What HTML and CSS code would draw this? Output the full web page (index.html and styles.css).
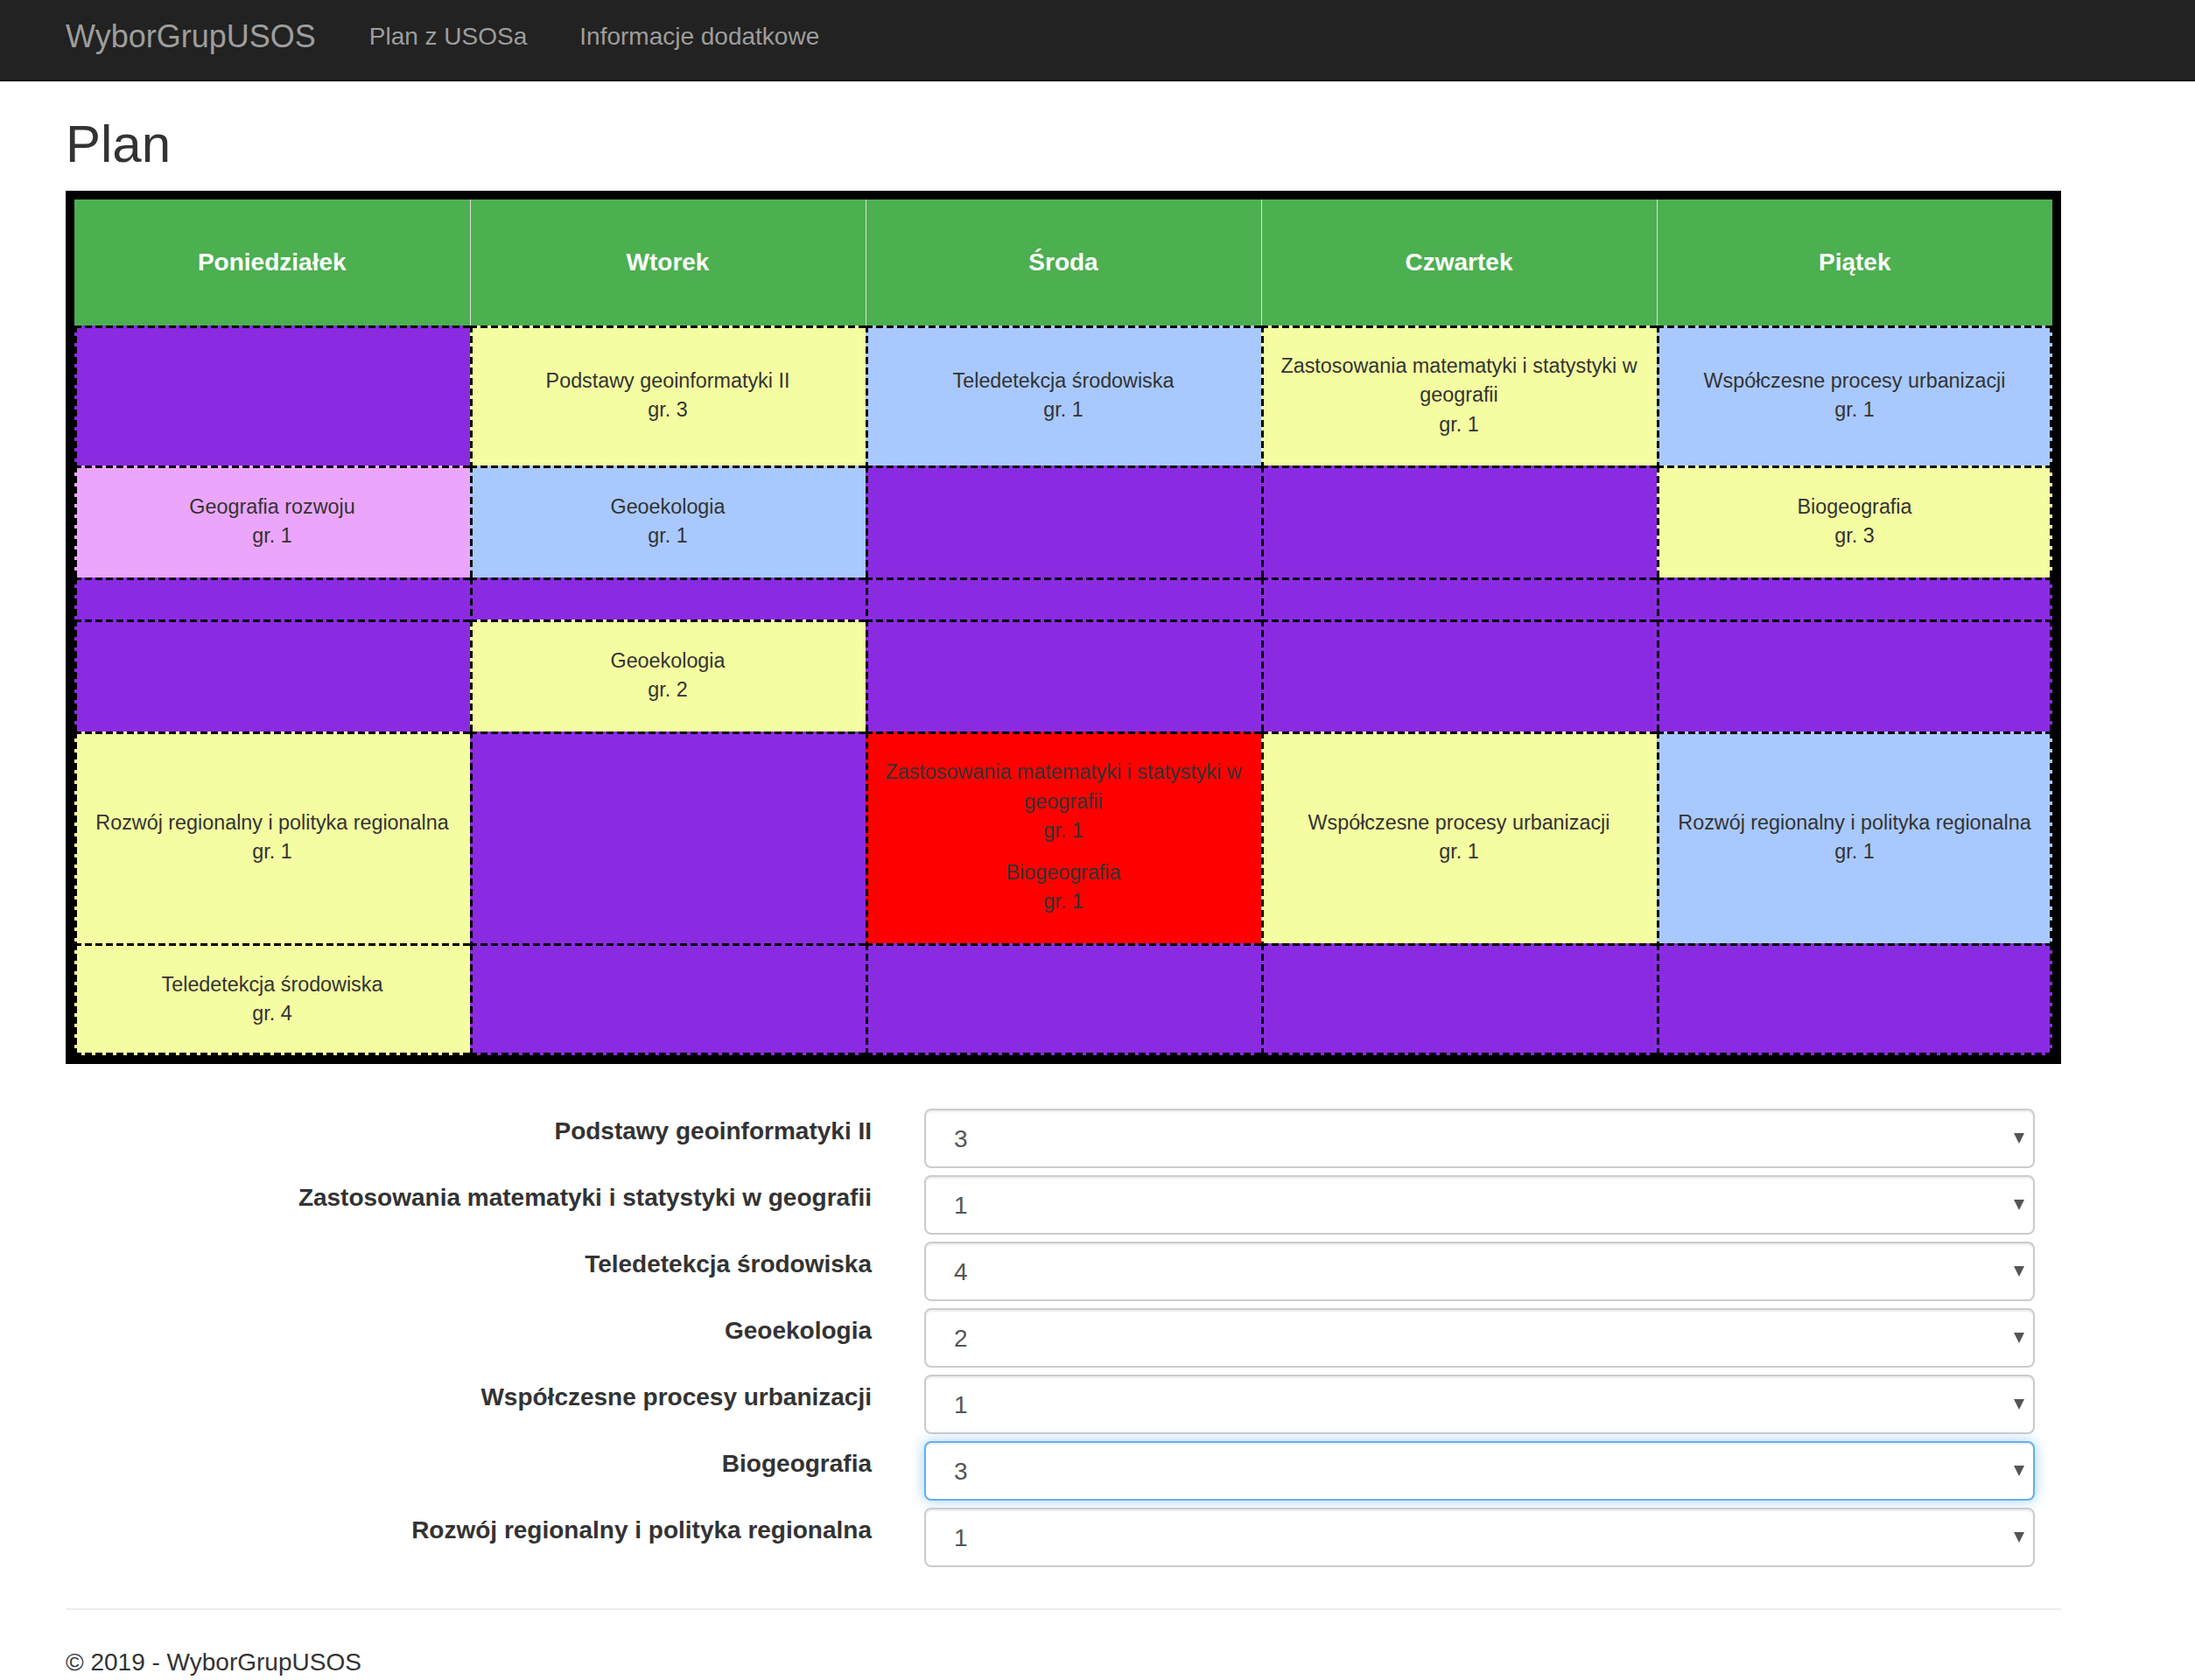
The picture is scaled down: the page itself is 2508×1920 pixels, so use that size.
FILE: index.html
```html
<!DOCTYPE html>
<html lang="pl">
<head>
<meta charset="utf-8">
<title>Plan - WyborGrupUSOS</title>
<link rel="stylesheet" href="styles.css">
</head>
<body>
<nav class="navbar">
  <div class="nav-inner">
    <a class="brand" href="#">WyborGrupUSOS</a>
    <ul class="nav-links">
      <li><a href="#">Plan z USOSa</a></li>
      <li><a href="#">Informacje dodatkowe</a></li>
    </ul>
  </div>
</nav>
<main class="container">
  <h2 class="title">Plan</h2>
  <div class="plan-frame">
    <table class="plan">
      <thead>
        <tr class="row-head">
          <th>Poniedziałek</th><th>Wtorek</th><th>Środa</th><th>Czwartek</th><th>Piątek</th>
        </tr>
      </thead>
      <tbody>
        <tr class="row-a">
          <td class="free"></td>
          <td class="yellow"><div class="entry">Podstawy geoinformatyki II<br>gr. 3</div></td>
          <td class="blue"><div class="entry">Teledetekcja środowiska<br>gr. 1</div></td>
          <td class="yellow"><div class="entry">Zastosowania matematyki i statystyki w geografii<br>gr. 1</div></td>
          <td class="blue"><div class="entry">Współczesne procesy urbanizacji<br>gr. 1</div></td>
        </tr>
        <tr class="row-b">
          <td class="pink"><div class="entry">Geografia rozwoju<br>gr. 1</div></td>
          <td class="blue"><div class="entry">Geoekologia<br>gr. 1</div></td>
          <td class="free"></td>
          <td class="free"></td>
          <td class="yellow"><div class="entry">Biogeografia<br>gr. 3</div></td>
        </tr>
        <tr class="row-c">
          <td class="free"></td><td class="free"></td><td class="free"></td><td class="free"></td><td class="free"></td>
        </tr>
        <tr class="row-b">
          <td class="free"></td>
          <td class="yellow"><div class="entry">Geoekologia<br>gr. 2</div></td>
          <td class="free"></td>
          <td class="free"></td>
          <td class="free"></td>
        </tr>
        <tr class="row-d">
          <td class="yellow"><div class="entry">Rozwój regionalny i polityka regionalna<br>gr. 1</div></td>
          <td class="free"></td>
          <td class="red"><div class="entry">Zastosowania matematyki i statystyki w geografii<br>gr. 1</div><div class="entry">Biogeografia<br>gr. 1</div></td>
          <td class="yellow"><div class="entry">Współczesne procesy urbanizacji<br>gr. 1</div></td>
          <td class="blue"><div class="entry">Rozwój regionalny i polityka regionalna<br>gr. 1</div></td>
        </tr>
        <tr class="row-b">
          <td class="yellow"><div class="entry">Teledetekcja środowiska<br>gr. 4</div></td>
          <td class="free"></td><td class="free"></td><td class="free"></td><td class="free"></td>
        </tr>
      </tbody>
    </table>
  </div>

  <form class="groups">
    <div class="form-row">
      <label class="form-label">Podstawy geoinformatyki II</label>
      <div class="select-wrap"><select class="form-select"><option>3</option></select></div>
    </div>
    <div class="form-row">
      <label class="form-label">Zastosowania matematyki i statystyki w geografii</label>
      <div class="select-wrap"><select class="form-select"><option>1</option></select></div>
    </div>
    <div class="form-row">
      <label class="form-label">Teledetekcja środowiska</label>
      <div class="select-wrap"><select class="form-select"><option>4</option></select></div>
    </div>
    <div class="form-row">
      <label class="form-label">Geoekologia</label>
      <div class="select-wrap"><select class="form-select"><option>2</option></select></div>
    </div>
    <div class="form-row">
      <label class="form-label">Współczesne procesy urbanizacji</label>
      <div class="select-wrap"><select class="form-select"><option>1</option></select></div>
    </div>
    <div class="form-row">
      <label class="form-label">Biogeografia</label>
      <div class="select-wrap"><select class="form-select is-focused"><option>3</option></select></div>
    </div>
    <div class="form-row">
      <label class="form-label">Rozwój regionalny i polityka regionalna</label>
      <div class="select-wrap"><select class="form-select"><option>1</option></select></div>
    </div>
  </form>

  <hr class="footer-rule">
  <footer class="footer">
    <p>© 2019 - WyborGrupUSOS</p>
  </footer>
</main>
</body>
</html>
```
FILE: styles.css
```css
* { box-sizing: border-box; }

html, body {
  margin: 0;
  padding: 0;
  background: #fff;
}

body {
  font-family: "Liberation Sans", Arial, Helvetica, sans-serif;
  font-size: 28px;
  line-height: 1.42857;
  color: #333;
  overflow: hidden;
}

/* Navbar */
.navbar {
  background: #222;
  border-bottom: 2px solid #080808;
  height: 93px;
}

.nav-inner {
  display: flex;
  align-items: center;
  height: 91px;
  padding-left: 75px;
  padding-bottom: 8px;
}

.brand {
  font-size: 36px;
  line-height: 40px;
  color: #9d9d9d;
  text-decoration: none;
  margin-right: 61px;
}

.nav-links {
  display: flex;
  gap: 60px;
  margin: 0;
  padding: 0;
  list-style: none;
}

.nav-links a {
  font-size: 28px;
  line-height: 40px;
  color: #9d9d9d;
  text-decoration: none;
}

/* Content */
.container {
  width: 2280px;
  margin-left: 75px;
}

.title {
  font-size: 60px;
  line-height: 66px;
  font-weight: 500;
  margin: 39px 0 20px;
  color: #333;
}

.plan-frame {
  border: 10px solid #000;
  width: 2280px;
}

.plan {
  width: 100%;
  border-collapse: collapse;
  border-spacing: 0;
  table-layout: fixed;
}

.plan th {
  background: #4caf50;
  color: #fff;
  font-weight: bold;
  font-size: 28px;
  text-align: center;
  vertical-align: middle;
  border-left: 1px solid #ddd;
  border-right: 1px solid #ddd;
  padding: 0 16px;
}

.plan th:first-child { border-left: none; }
.plan th:last-child { border-right: none; }

.plan td {
  --bg: #8a2be2;
  --dash-h: repeating-linear-gradient(to right, #000 0 8px, transparent 8px 12px);
  --dash-v: repeating-linear-gradient(to bottom, #000 0 8px, transparent 8px 12px);
  border: none;
  padding: 0 16px;
  text-align: center;
  vertical-align: middle;
  font-size: 23.33px;
  line-height: 33.33px;
  color: #333;
  background:
    var(--dash-h) left top / 100% 3px no-repeat,
    var(--dash-v) left top / 3px 100% no-repeat,
    var(--bg);
}

.plan td:last-child {
  background:
    var(--dash-h) left top / 100% 3px no-repeat,
    var(--dash-v) left top / 3px 100% no-repeat,
    var(--dash-v) right top / 3px 100% no-repeat,
    var(--bg);
}

.plan tbody tr:last-child td {
  background:
    var(--dash-h) left top / 100% 3px no-repeat,
    var(--dash-h) left bottom / 100% 3px no-repeat,
    var(--dash-v) left top / 3px 100% no-repeat,
    var(--bg);
}

.plan tbody tr:last-child td:last-child {
  background:
    var(--dash-h) left top / 100% 3px no-repeat,
    var(--dash-h) left bottom / 100% 3px no-repeat,
    var(--dash-v) left top / 3px 100% no-repeat,
    var(--dash-v) right top / 3px 100% no-repeat,
    var(--bg);
}

.row-head { height: 144px; }
.row-a { height: 160px; }
.row-b { height: 128px; }
.row-c { height: 48px; }
.row-d { height: 242px; }

.plan td.free { --bg: #8a2be2; }
.plan td.yellow { --bg: #f4fda1; }
.plan td.blue { --bg: #a9c9fe; }
.plan td.pink { --bg: #eba6fb; }
.plan td.red { --bg: #ff0000; }

.entry + .entry { margin-top: 15px; }

/* Form */
.groups {
  margin-top: 51px;
  display: flex;
  flex-direction: column;
  gap: 8px;
}

.form-row {
  display: grid;
  grid-template-columns: 921px 1269px;
  column-gap: 60px;
  align-items: start;
}

.form-label {
  text-align: right;
  font-weight: bold;
  font-size: 28px;
  line-height: 40px;
  padding-top: 6px;
  color: #333;
}

.select-wrap {
  position: relative;
}

.select-wrap::after {
  content: "";
  position: absolute;
  right: 12px;
  top: 28px;
  width: 0;
  height: 0;
  border-left: 6px solid transparent;
  border-right: 6px solid transparent;
  border-top: 12px solid #555;
  pointer-events: none;
}

.form-select {
  -webkit-appearance: none;
  appearance: none;
  display: block;
  width: 100%;
  height: 68px;
  padding: 0 40px 0 32px;
  font-family: inherit;
  font-size: 28px;
  color: #555;
  background: #fff;
  border: 2px solid #ccc;
  border-radius: 8px;
  box-shadow: inset 0 2px 2px rgba(0, 0, 0, 0.075);
  outline: none;
}

.form-select.is-focused {
  border-color: #66afe9;
  box-shadow: inset 0 2px 2px rgba(0, 0, 0, 0.075), 0 0 16px rgba(102, 175, 233, 0.6);
}

/* Footer */
.footer-rule {
  margin: 47px 0 0;
  border: 0;
  border-top: 2px solid #eee;
  height: 0;
}

.footer p {
  margin: 40px 0 0;
  font-size: 28px;
  line-height: 40px;
}
```
